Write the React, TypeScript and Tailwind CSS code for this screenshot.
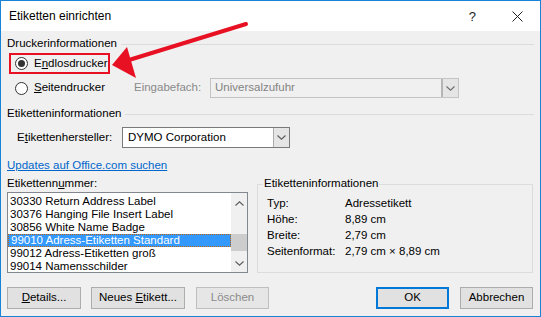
import React from 'react';

function Radio({ checked }: { checked?: boolean }) {
  return (
    <span className="w-[13px] h-[13px] rounded-full border border-[#333333] bg-white flex items-center justify-center shrink-0">
      {checked && <span className="w-[7px] h-[7px] rounded-full bg-[#333333]" />}
    </span>
  );
}

function Chevron({ up, color = '#606060' }: { up?: boolean; color?: string }) {
  return (
    <svg width="9" height="5" viewBox="0 0 9 5">
      <path d={up ? 'M0.5 4.5 L4.5 0.8 L8.5 4.5' : 'M0.5 0.5 L4.5 4.2 L8.5 0.5'} fill="none" stroke={color} strokeWidth="1.2" />
    </svg>
  );
}

function SectionHeading({ title }: { title: string }) {
  return (
    <div className="flex items-center h-[14px]">
      <span>{title}</span>
      <div className="flex-1 h-px bg-[#dcdcdc] ml-[4px]" />
    </div>
  );
}

function Button({ children, width, disabled, primary }: { children: React.ReactNode; width: string; disabled?: boolean; primary?: boolean }) {
  return (
    <div
      className={`${width} h-[22px] flex items-center justify-center bg-[#e1e1e1] ${
        primary ? 'border-2 border-[#0078d7]' : 'border border-[#adadad]'
      } ${disabled ? 'text-[#8a8a8a] bg-[#e6e6e6] border-[#bfbfbf]' : 'text-black'}`}
    >
      {children}
    </div>
  );
}

export default function App() {
  const labels = [
    '30330 Return Address Label',
    '30376 Hanging File Insert Label',
    '30856 White Name Badge',
    '99010 Adress-Etiketten Standard',
    '99012 Adress-Etiketten groß',
    '99014 Namensschilder',
  ];

  const info = [
    ['Typ:', 'Adressetikett'],
    ['Höhe:', '8,89 cm'],
    ['Breite:', '2,79 cm'],
    ['Seitenformat:', '2,79 cm × 8,89 cm'],
  ];

  return (
    <div className="relative w-[541px] h-[317px] overflow-hidden border border-[#1883d7] bg-[#f0f0f0] font-['Liberation_Sans',Arial,sans-serif] text-[11.5px] text-black leading-none">
      {/* title bar */}
      <div className="h-[30px] bg-white flex items-center pl-[8px] pr-[17px]">
        <span className="text-[12px]">Etiketten einrichten</span>
        <span className="ml-auto text-[13px] text-[#222]">?</span>
        <svg className="ml-[36px]" width="11" height="11" viewBox="0 0 11 11">
          <path d="M0.5 0.5 L10.5 10.5 M10.5 0.5 L0.5 10.5" stroke="#222" strokeWidth="1" />
        </svg>
      </div>

      <div className="px-[6px]">
        <div className="mt-[6px]">
          <SectionHeading title="Druckerinformationen" />
        </div>

        <div className="mt-[2px] h-[21px] flex items-center">
          <div className="ml-[2px] w-[101px] h-[21px] border-2 border-[#e81123] flex items-center pl-[4px] gap-[6px]">
            <Radio checked />
            <span>
              E<span className="underline">n</span>dlosdrucker
            </span>
          </div>
        </div>

        <div className="mt-[4px] h-[20px] flex items-center">
          <div className="w-[127px] pl-[8px] flex items-center gap-[6px]">
            <Radio />
            <span>
              <span className="underline">S</span>eitendrucker
            </span>
          </div>
          <span className="w-[76px] text-[#8a8a8a]">Eingabefach:</span>
          <div className="w-[249px] h-[20px] border border-[#c4c4c4] bg-[#f0f0f0] flex items-stretch">
            <span className="flex-1 flex items-center pl-[4px] text-[#838383]">Universalzufuhr</span>
            <div className="w-[17px] bg-[#e5e5e5] border-l-2 border-[#b5b5b5] flex items-center justify-center">
              <Chevron color="#707070" />
            </div>
          </div>
        </div>

        <div className="mt-[9px]">
          <SectionHeading title="Etiketteninformationen" />
        </div>

        <div className="mt-[6px] h-[21px] flex items-center">
          <span className="w-[115px] pl-[10px]">
            E<span className="underline">t</span>ikettenhersteller:
          </span>
          <div className="w-[168px] h-[21px] border border-[#7a7a7a] bg-white flex items-stretch">
            <span className="flex-1 flex items-center pl-[5px]">DYMO Corporation</span>
            <div className="w-[16px] bg-[#e5e5e5] border-l border-[#adadad] flex items-center justify-center">
              <Chevron />
            </div>
          </div>
        </div>

        <div className="mt-[11px] h-[14px] flex items-center">
          <span className="text-[#0066cc] underline">Updates auf Office.com suchen</span>
        </div>

        <div className="mt-[4px] flex items-start">
          <div className="w-[241px] flex flex-col">
            <div className="h-[14px] flex items-center">
              <span>
                Etikettenn<span className="underline">u</span>mmer:
              </span>
            </div>
            <div className="mt-[1px] h-[81px] border border-[#828790] bg-white flex overflow-hidden">
              <div className="flex-1 pt-[2px] overflow-hidden">
                {labels.map((l, i) => (
                  <div
                    key={i}
                    className={`h-[13px] flex items-center pl-[2px] whitespace-nowrap ${
                      i === 3 ? 'bg-[#3399ff] text-white border border-dotted border-[#c66300]' : ''
                    }`}
                  >
                    {l}
                  </div>
                ))}
              </div>
              <div className="w-[16px] bg-[#f0f0f0] flex flex-col">
                <div className="h-[20px] flex items-center justify-center">
                  <Chevron up />
                </div>
                <div className="mt-[21px] h-[17px] bg-[#cdcdcd]" />
                <div className="flex-1" />
                <div className="h-[17px] flex items-center justify-center">
                  <Chevron />
                </div>
              </div>
            </div>
          </div>

          <div className="ml-[9px] mt-[7px] w-[276px] h-[89px] border border-[#dcdcdc] relative pt-[11px] pl-[9px]">
            <span className="absolute top-[-7px] left-[5px] bg-[#f0f0f0] px-[1px]">Etiketteninformationen</span>
            {info.map(([k, v]) => (
              <div key={k} className="h-[16px] flex items-center">
                <span className="w-[78px]">{k}</span>
                <span>{v}</span>
              </div>
            ))}
          </div>
        </div>

        <div className="mt-[14px] flex items-center">
          <Button width="w-[74px]">
            <span>
              <span className="underline">D</span>etails...
            </span>
          </Button>
          <div className="ml-[10px]">
            <Button width="w-[94px]">
              <span>
                Neues <span className="underline">E</span>tikett...
              </span>
            </Button>
          </div>
          <div className="ml-[11px]">
            <Button width="w-[73px]" disabled>
              Löschen
            </Button>
          </div>
          <div className="ml-auto">
            <Button width="w-[73px]" primary>
              OK
            </Button>
          </div>
          <div className="ml-[11px] mr-[1px]">
            <Button width="w-[73px]">Abbrechen</Button>
          </div>
        </div>
      </div>

      {/* red annotation arrow */}
      <svg className="absolute left-0 top-0 pointer-events-none" width="541" height="317" viewBox="0 0 541 317">
        <line x1="245" y1="23" x2="128" y2="59" stroke="#e81123" strokeWidth="4" strokeLinecap="round" />
        <polygon points="111,64 126,46 135,77" fill="#e81123" />
      </svg>
    </div>
  );
}
